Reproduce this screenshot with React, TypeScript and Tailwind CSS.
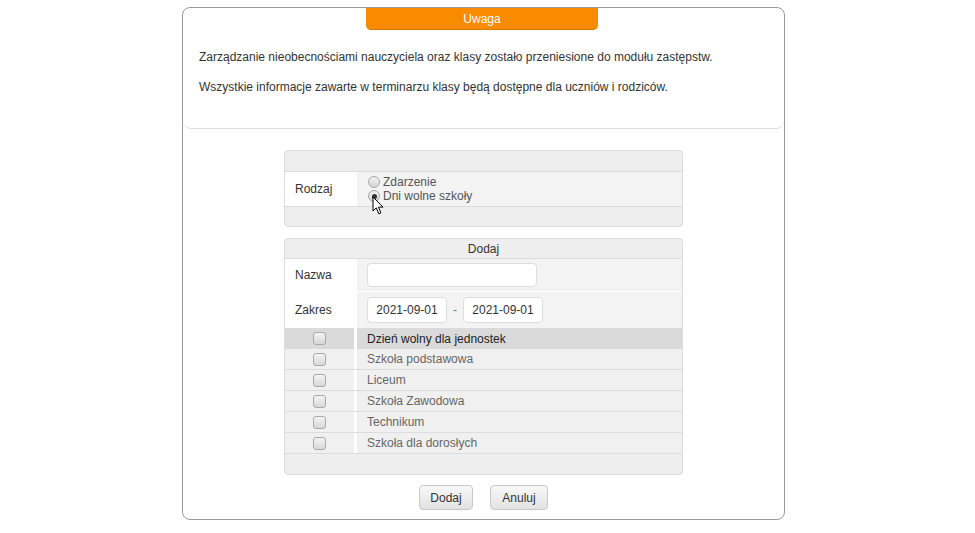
import React from 'react'

const units = ['Szkoła podstawowa', 'Liceum', 'Szkoła Zawodowa', 'Technikum', 'Szkoła dla dorosłych']

function Box() {
	return (
		<span className="inline-block h-[13px] w-[13px] rounded-[3px] border border-[#a9a9a9] bg-gradient-to-b from-[#f4f4f4] to-[#d8d8d8]" />
	)
}

function Radio({ checked }: { checked?: boolean }) {
	return (
		<span className="relative mr-[3px] inline-flex h-[12px] w-[12px] items-center justify-center rounded-full border border-[#a9a9a9] bg-gradient-to-b from-[#f2f2f2] to-[#d6d6d6]">
			{checked && <span className="h-[5px] w-[5px] rounded-full bg-[#333]" />}
		</span>
	)
}

function Cursor() {
	return (
		<svg className="absolute left-[372px] top-[196px]" width="13" height="20" viewBox="0 0 13 20">
			<path d="M1 1 L1 15 L4.3 11.8 L6.8 17.8 L8.9 16.9 L6.5 11.1 L11 11.1 Z" fill="#fff" stroke="#000" strokeWidth="1" strokeLinejoin="round" />
		</svg>
	)
}

export default function App() {
	return (
		<div className="relative min-h-[533px] bg-white pt-[7px] font-['Liberation_Sans',Arial,sans-serif] text-[#333]">
			<div className="ml-[182px] w-[603px] rounded-[8px] border border-[#9a9a9a] pb-[9px]">
				{/* notice */}
				<div className="h-[121px] rounded-b-[8px] border-b border-[#dedede]">
					<div className="ml-[183px] flex h-[22px] w-[232px] items-center justify-center rounded-b-[5px] border-b border-[#d97800] bg-[#f88b00] text-[12px] text-white">
						Uwaga
					</div>
					<p className="mt-[19px] pl-[16px] text-[12px] leading-[16px]">
						Zarządzanie nieobecnościami nauczyciela oraz klasy zostało przeniesione do modułu zastępstw.
					</p>
					<p className="mt-[14px] pl-[16px] text-[12px] leading-[16px]">
						Wszystkie informacje zawarte w terminarzu klasy będą dostępne dla uczniów i rodziców.
					</p>
				</div>

				{/* rodzaj */}
				<div className="mx-auto mt-[21px] w-[399px] overflow-hidden rounded-[4px] border border-[#dcdcdc] bg-[#eeeeee] text-[12px]">
					<div className="h-[20px]" />
					<div className="flex h-[36px] border-y border-[#dcdcdc]">
						<div className="flex w-[72px] items-center bg-white pl-[10px]">Rodzaj</div>
						<div className="flex flex-1 flex-col justify-center bg-[#f3f3f3] pl-[11px] text-[12px] leading-[14px] text-[#555]">
							<label className="flex items-center">
								<Radio />
								Zdarzenie
							</label>
							<label className="flex items-center">
								<Radio checked />
								Dni wolne szkoły
							</label>
						</div>
					</div>
					<div className="h-[19px]" />
				</div>

				{/* dodaj */}
				<div className="mx-auto mt-[11px] w-[399px] overflow-hidden rounded-[4px] border border-[#dcdcdc] bg-[#eeeeee] text-[12px]">
					<div className="flex h-[20px] items-center justify-center border-b border-[#dcdcdc]">Dodaj</div>
					<div className="flex h-[32px]">
						<div className="flex w-[72px] items-center bg-white pl-[10px]">Nazwa</div>
						<div className="flex flex-1 items-center bg-[#f3f3f3] pl-[10px]">
							<input className="h-[24px] w-[170px] rounded-[4px] border border-[#dddddd] bg-white px-2 outline-none" />
						</div>
					</div>
					<div className="flex h-[37px] border-t border-white">
						<div className="flex w-[72px] items-center bg-white pl-[10px]">Zakres</div>
						<div className="flex flex-1 items-center bg-[#f3f3f3] pl-[10px]">
							<div className="flex h-[26px] w-[80px] items-center justify-center rounded-[4px] border border-[#dddddd] bg-white">2021-09-01</div>
							<span className="mx-[6px] text-[#777]">-</span>
							<div className="flex h-[26px] w-[80px] items-center justify-center rounded-[4px] border border-[#dddddd] bg-white">2021-09-01</div>
						</div>
					</div>
					<div className="flex h-[21px] bg-[#dadada]">
						<div className="flex w-[69px] items-center justify-center">
							<Box />
						</div>
						<div className="w-[3px] bg-white" />
						<div className="flex flex-1 items-center pl-[10px] text-[#222]">Dzień wolny dla jednostek</div>
					</div>
					{units.map((u) => (
						<div key={u} className="flex h-[21px] border-b border-[#dcdcdc] bg-[#f0f0f0]">
							<div className="flex w-[69px] items-center justify-center">
								<Box />
							</div>
							<div className="w-[3px] bg-white" />
							<div className="flex flex-1 items-center pl-[10px] text-[#666]">{u}</div>
						</div>
					))}
					<div className="h-[20px]" />
				</div>

				<div className="mt-[10px] flex justify-center gap-[17px] text-[12px]">
					<button className="h-[25px] w-[54px] rounded-[4px] border border-[#c8c8c8] bg-gradient-to-b from-[#f8f8f8] to-[#e2e2e2]">Dodaj</button>
					<button className="h-[25px] w-[58px] rounded-[4px] border border-[#c8c8c8] bg-gradient-to-b from-[#f8f8f8] to-[#e2e2e2]">Anuluj</button>
				</div>
			</div>
			<Cursor />
		</div>
	)
}
